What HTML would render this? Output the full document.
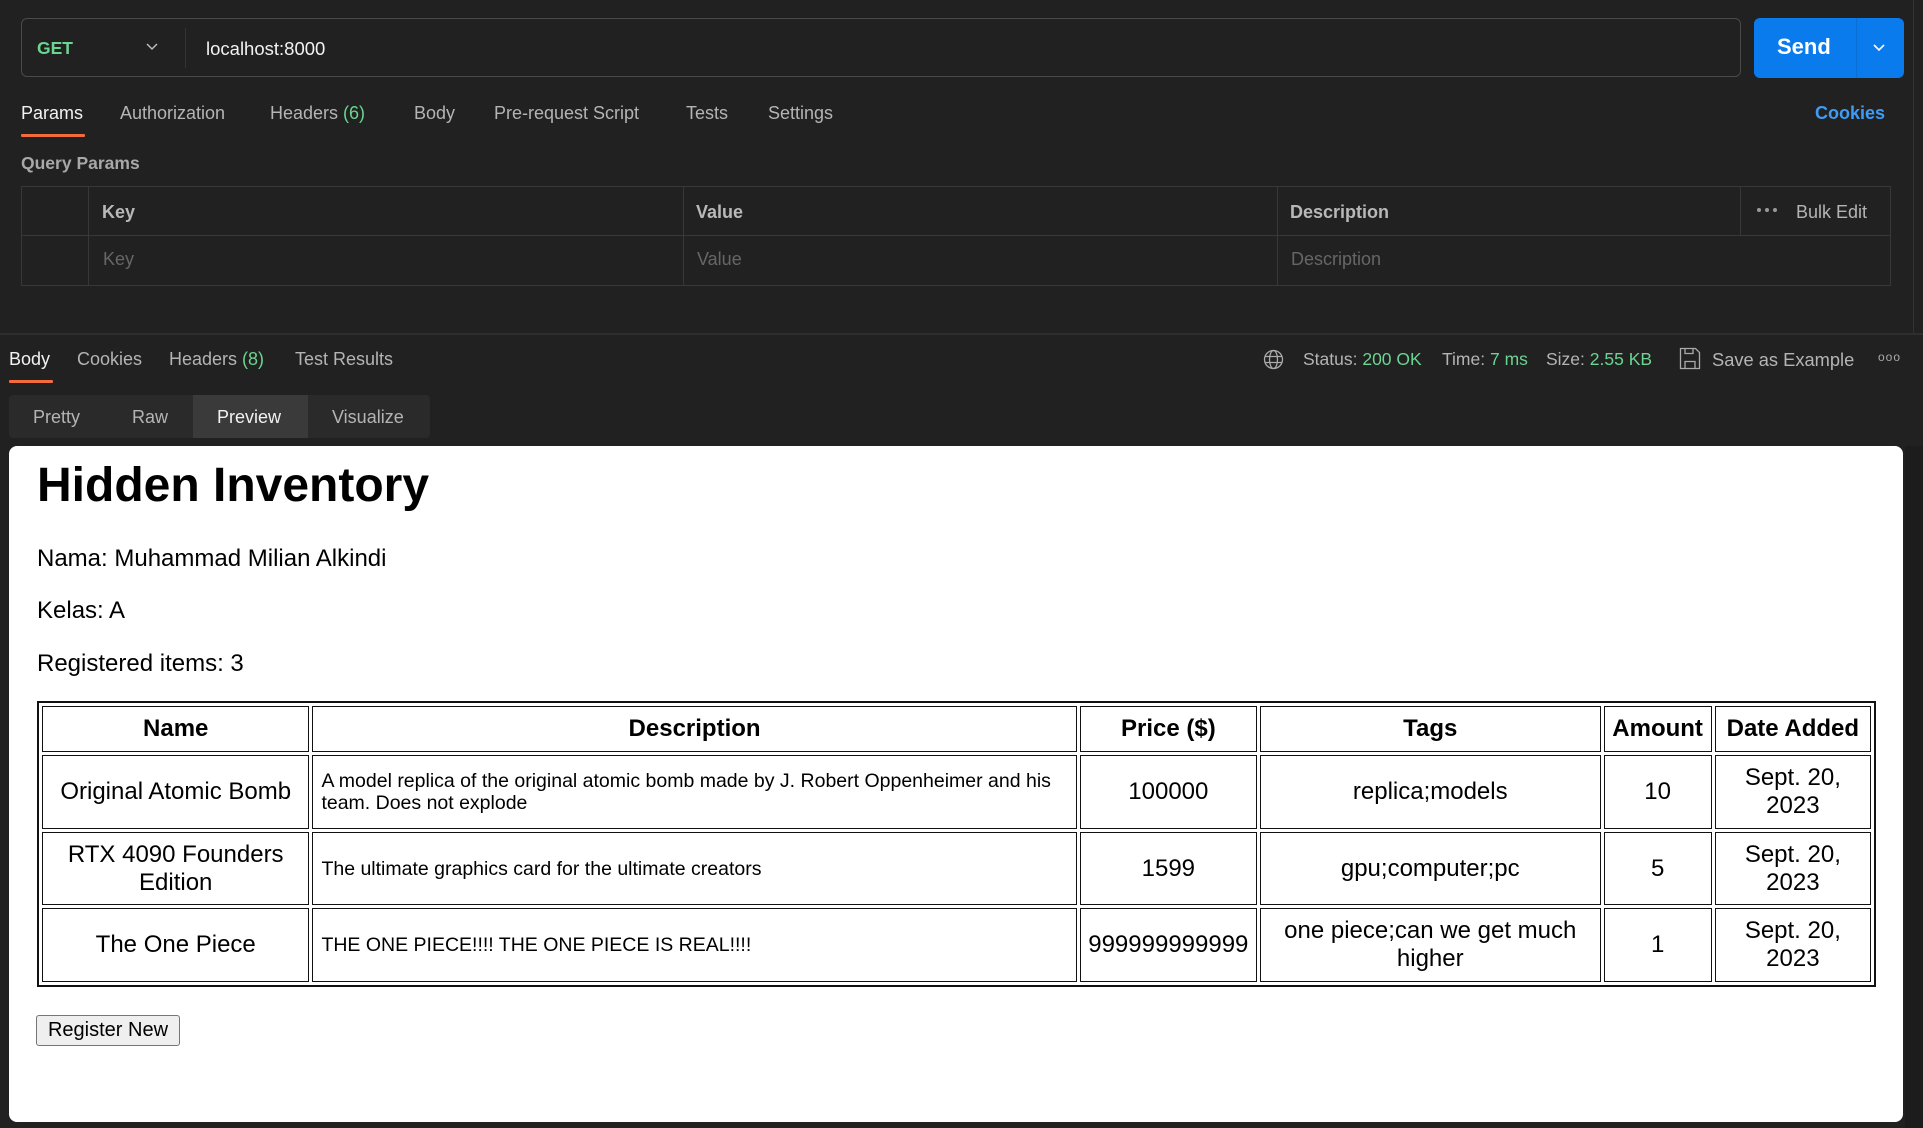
<!DOCTYPE html>
<html><head><meta charset="utf-8">
<style>
*{box-sizing:border-box;margin:0;padding:0}
html,body{width:1923px;height:1128px;background:#212121;overflow:hidden;font-family:"Liberation Sans",Arial,sans-serif;color:#d0d0d0}
.a{position:absolute;white-space:nowrap}
.g{color:#6bd491}
.t{font-size:18px;color:#b4b4b4}
.w{color:#f2f2f2}
.ul{position:absolute;height:3px;background:#f26b3a;border-radius:1px}
#prev{position:absolute;left:9px;top:446px;width:1894px;height:676px;background:#fff;border-radius:8px;color:#000}
#prev .x{position:absolute;white-space:nowrap;line-height:1}
table{position:absolute;left:28px;top:255px;border:2px solid #111;border-spacing:3px;table-layout:fixed;width:1839px;border-collapse:separate}
td,th{border:1.5px solid #111;text-align:center;font-size:24px;line-height:28px;padding:0 4px}
th{height:46px;font-weight:bold}
td.d{text-align:left;font-size:19.5px;line-height:22px;padding:0 8px}
</style></head><body>
<div class="a" style="left:21px;top:18px;width:1720px;height:59px;border:1px solid #4a4a4a;border-radius:6px"></div>
<div class="a" style="left:185px;top:28px;width:1px;height:40px;background:#333"></div>
<div class="a g" style="left:37px;top:38px;font-size:17.5px;font-weight:bold;color:#6bd491">GET</div>
<svg class="a" style="left:145px;top:41px" width="14" height="12" viewBox="0 0 14 12"><path d="M2 3l5 5 5-5" fill="none" stroke="#bbb" stroke-width="1.5"/></svg>
<div class="a w" style="left:206px;top:38px;font-size:18.5px">localhost:8000</div>
<div class="a" style="left:1754px;top:18px;width:150px;height:60px;background:#097bed;border-radius:6px"></div>
<div class="a" style="left:1856px;top:18px;width:1px;height:60px;background:#0a6fd4"></div>
<div class="a" style="left:1777px;top:34px;font-size:22px;font-weight:bold;color:#fff">Send</div>
<svg class="a" style="left:1871px;top:42px" width="16" height="12" viewBox="0 0 16 12"><path d="M3 3l5 5 5-5" fill="none" stroke="#fff" stroke-width="1.6"/></svg>
<div class="a" style="left:1913px;top:0;width:1px;height:334px;background:#333"></div>
<div class="a t w" style="left:21px;top:103px">Params</div>
<div class="ul" style="left:21px;top:134px;width:64px"></div>
<div class="a t" style="left:120px;top:103px">Authorization</div>
<div class="a t" style="left:270px;top:103px">Headers <span class="g">(6)</span></div>
<div class="a t" style="left:414px;top:103px">Body</div>
<div class="a t" style="left:494px;top:103px">Pre-request Script</div>
<div class="a t" style="left:686px;top:103px">Tests</div>
<div class="a t" style="left:768px;top:103px">Settings</div>
<div class="a" style="left:1815px;top:103px;font-size:18px;font-weight:bold;color:#3e9cf7">Cookies</div>
<div class="a" style="left:21px;top:153px;font-size:17.5px;font-weight:bold;color:#a8a8a8">Query Params</div>
<div class="a" style="left:21px;top:186px;width:1870px;height:100px;border:1px solid #383838"></div>
<div class="a" style="left:21px;top:235px;width:1870px;height:1px;background:#383838"></div>
<div class="a" style="left:88px;top:186px;width:1px;height:100px;background:#383838"></div>
<div class="a" style="left:683px;top:186px;width:1px;height:100px;background:#383838"></div>
<div class="a" style="left:1277px;top:186px;width:1px;height:100px;background:#383838"></div>
<div class="a" style="left:1740px;top:186px;width:1px;height:49px;background:#383838"></div>
<div class="a" style="left:102px;top:202px;font-size:18px;font-weight:bold;color:#b8b8b8">Key</div>
<div class="a" style="left:696px;top:202px;font-size:18px;font-weight:bold;color:#b8b8b8">Value</div>
<div class="a" style="left:1290px;top:202px;font-size:18px;font-weight:bold;color:#b8b8b8">Description</div>
<div class="a" style="left:1757px;top:208px;display:flex;gap:4px"><i style="width:4px;height:4px;border-radius:50%;background:#999"></i><i style="width:4px;height:4px;border-radius:50%;background:#999"></i><i style="width:4px;height:4px;border-radius:50%;background:#999"></i></div>
<div class="a" style="left:1796px;top:202px;font-size:18px;color:#b4b4b4">Bulk Edit</div>
<div class="a" style="left:103px;top:249px;font-size:18px;color:#666">Key</div>
<div class="a" style="left:697px;top:249px;font-size:18px;color:#666">Value</div>
<div class="a" style="left:1291px;top:249px;font-size:18px;color:#666">Description</div>
<div class="a" style="left:0;top:333px;width:1923px;height:2px;background:#2e2e2e"></div>
<div class="a t w" style="left:9px;top:349px">Body</div>
<div class="ul" style="left:9px;top:380px;width:44px"></div>
<div class="a t" style="left:77px;top:349px">Cookies</div>
<div class="a t" style="left:169px;top:349px">Headers <span class="g">(8)</span></div>
<div class="a t" style="left:295px;top:349px">Test Results</div>
<svg class="a" style="left:1263px;top:349px" width="21" height="21" viewBox="0 0 21 21" fill="none" stroke="#aaa" stroke-width="1.3"><circle cx="10.5" cy="10.5" r="9"/><ellipse cx="10.5" cy="10.5" rx="4" ry="9"/><path d="M2 7.5h17M2 13.5h17"/></svg>
<div class="a t" style="left:1303px;top:349px;font-size:17.5px">Status: <span class="g">200 OK</span></div>
<div class="a t" style="left:1442px;top:349px;font-size:17.5px">Time: <span class="g">7 ms</span></div>
<div class="a t" style="left:1546px;top:349px;font-size:17.5px">Size: <span class="g">2.55 KB</span></div>
<svg class="a" style="left:1679px;top:347px" width="22" height="23" viewBox="0 0 22 23" fill="none" stroke="#aaa" stroke-width="1.3"><path d="M1.5 1.5h15l4 4v16h-19z"/><path d="M6 1.5v5h8v-5M6 21.5v-7h10v7"/></svg>
<div class="a t" style="left:1712px;top:349px;font-size:18.3px">Save as Example</div>
<div class="a" style="left:1878px;top:350px;font-size:12px;color:#aaa;letter-spacing:1px">ooo</div>
<div class="a" style="left:9px;top:395px;width:421px;height:43px;background:#2a2a2a;border-radius:4px"></div>
<div class="a" style="left:193px;top:395px;width:115px;height:43px;background:#3a3a3a"></div>
<div class="a t" style="left:33px;top:407px">Pretty</div>
<div class="a t" style="left:132px;top:407px">Raw</div>
<div class="a t w" style="left:217px;top:407px">Preview</div>
<div class="a t" style="left:332px;top:407px">Visualize</div>
<div class="a" style="left:1905px;top:446px;width:18px;height:682px;background:#1c1c1c"></div>
<div id="prev">
<div class="x" style="left:28px;top:16px;font-size:48px;font-weight:bold">Hidden Inventory</div>
<div class="x" style="left:28px;top:101px;font-size:24px">Nama: Muhammad Milian Alkindi</div>
<div class="x" style="left:28px;top:153px;font-size:24px">Kelas: A</div>
<div class="x" style="left:28px;top:206px;font-size:24px">Registered items: 3</div>
<table>
<colgroup><col style="width:267px"><col style="width:763px"><col style="width:177px"><col style="width:340px"><col style="width:108px"><col style="width:156px"></colgroup>
<tr><th>Name</th><th>Description</th><th>Price ($)</th><th>Tags</th><th style="padding:0">Amount</th><th style="padding:0">Date Added</th></tr>
<tr style="height:74px"><td>Original Atomic Bomb</td><td class="d">A model replica of the original atomic bomb made by J. Robert Oppenheimer and his team. Does not explode</td><td>100000</td><td>replica;models</td><td>10</td><td>Sept. 20, 2023</td></tr>
<tr style="height:73px"><td>RTX 4090 Founders Edition</td><td class="d">The ultimate graphics card for the ultimate creators</td><td>1599</td><td>gpu;computer;pc</td><td>5</td><td>Sept. 20, 2023</td></tr>
<tr style="height:74px"><td>The One Piece</td><td class="d">THE ONE PIECE!!!! THE ONE PIECE IS REAL!!!!</td><td style="padding:0">999999999999</td><td>one piece;can we get much higher</td><td>1</td><td>Sept. 20, 2023</td></tr>
</table>
<div class="x" style="left:27px;top:569px;width:144px;height:31px;border:1px solid #767676;border-radius:3px;background:#efefef;font-size:20px;line-height:29px;text-align:center">Register New</div>
</div>
</body></html>
